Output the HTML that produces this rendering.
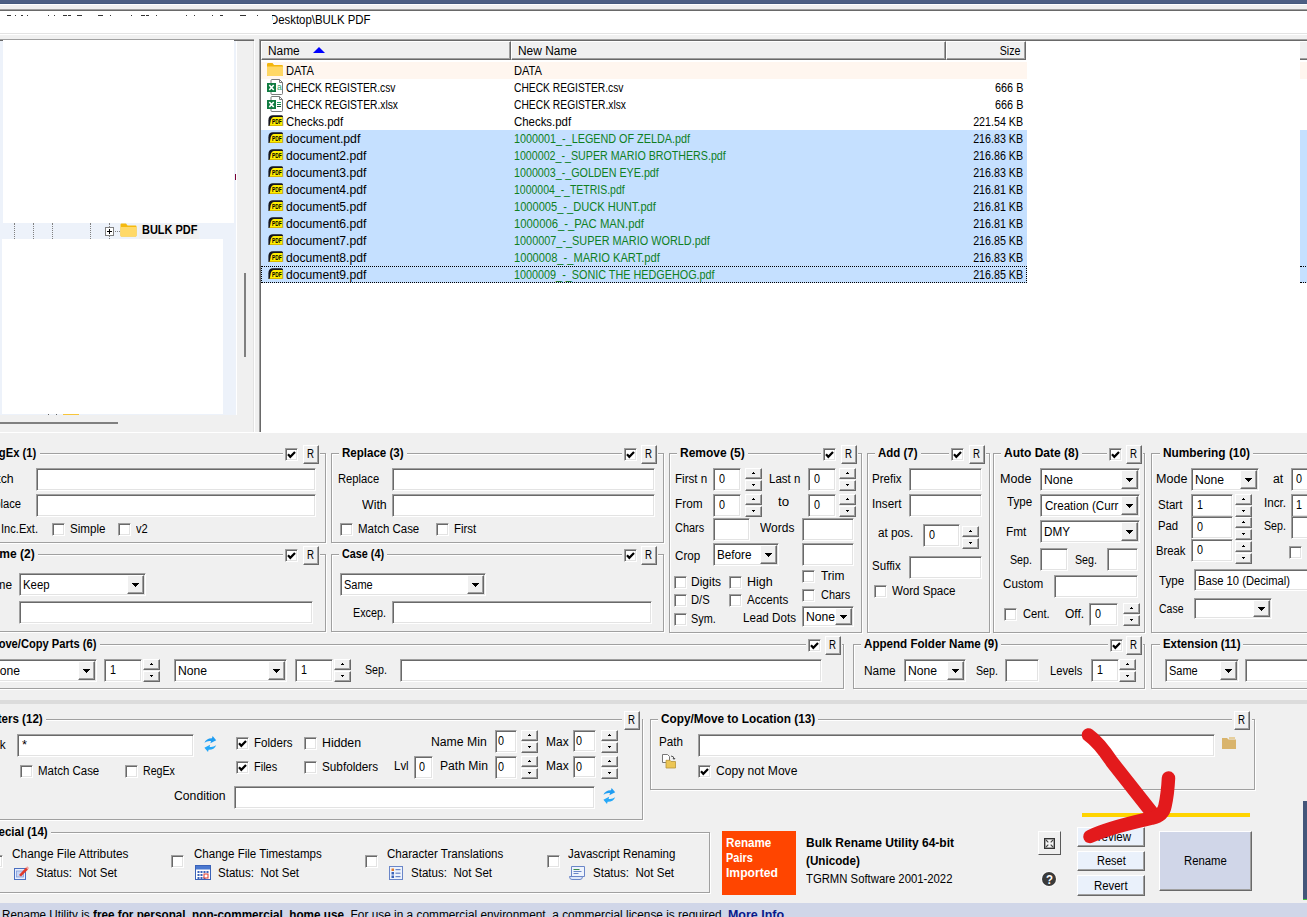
<!DOCTYPE html>
<html><head><meta charset="utf-8"><title>Bulk Rename Utility</title>
<style>
html,body{margin:0;padding:0}
body{width:1307px;height:917px;overflow:hidden;background:#f0f0f0;font:12px/14px "Liberation Sans",sans-serif;color:#000}
#root{position:relative;width:1307px;height:917px;overflow:hidden;background:#f0f0f0}
.a{position:absolute}
.t{position:absolute;white-space:pre;transform-origin:0 0;line-height:14px}
.sk{position:absolute;box-sizing:border-box;border:1px solid;border-color:#a0a0a0 #fff #fff #a0a0a0;box-shadow:inset 1px 1px 0 #696969,inset -1px -1px 0 #e3e3e3}
.rb{position:absolute;box-sizing:border-box;border:1px solid;border-color:#fff #696969 #696969 #fff;box-shadow:inset -1px -1px 0 #a0a0a0}
.cb{position:absolute;box-sizing:border-box;width:13px;height:13px;background:#fff;border:1px solid;border-color:#a0a0a0 #fff #fff #a0a0a0;box-shadow:inset 1px 1px 0 #696969,inset -1px -1px 0 #e3e3e3}
.gb{position:absolute;border:1px solid #a0a0a0;box-shadow:1px 1px 0 #fff,inset 1px 1px 0 #fff}

</style></head>
<body>
<div id="root">
<div class="a" style="left:0px;top:0px;width:1307px;height:4px;background:#4d5f84;"></div>
<div class="a" style="left:0px;top:3px;width:1307px;height:1px;background:#465a7e;"></div>
<div class="a" style="left:0px;top:4px;width:1307px;height:1px;background:#fff;"></div>
<div class="sk" style="left:-5px;top:9px;width:1320px;height:26px;background:#fff"></div>
<div class="a" style="left:7px;top:15px;width:4px;height:1px;background:#333;"></div>
<div class="a" style="left:15px;top:15px;width:1px;height:1px;background:#333;"></div>
<div class="a" style="left:21px;top:15px;width:2px;height:1px;background:#333;"></div>
<div class="a" style="left:27px;top:15px;width:1px;height:1px;background:#333;"></div>
<div class="a" style="left:48px;top:15px;width:1px;height:1px;background:#333;"></div>
<div class="a" style="left:54px;top:15px;width:1px;height:1px;background:#333;"></div>
<div class="a" style="left:63px;top:15px;width:4px;height:1px;background:#333;"></div>
<div class="a" style="left:68px;top:15px;width:3px;height:1px;background:#333;"></div>
<div class="a" style="left:77px;top:15px;width:5px;height:1px;background:#333;"></div>
<div class="a" style="left:98px;top:15px;width:5px;height:1px;background:#333;"></div>
<div class="a" style="left:110px;top:15px;width:1px;height:1px;background:#333;"></div>
<div class="a" style="left:131px;top:15px;width:1px;height:1px;background:#333;"></div>
<div class="a" style="left:141px;top:15px;width:4px;height:1px;background:#333;"></div>
<div class="a" style="left:146px;top:15px;width:3px;height:1px;background:#333;"></div>
<div class="a" style="left:156px;top:15px;width:1px;height:1px;background:#333;"></div>
<div class="a" style="left:186px;top:15px;width:1px;height:1px;background:#333;"></div>
<div class="a" style="left:194px;top:15px;width:1px;height:1px;background:#333;"></div>
<div class="a" style="left:212px;top:15px;width:1px;height:1px;background:#333;"></div>
<div class="a" style="left:220px;top:15px;width:3px;height:1px;background:#333;"></div>
<div class="a" style="left:240px;top:15px;width:6px;height:1px;background:#333;"></div>
<div class="a" style="left:257px;top:15px;width:1px;height:1px;background:#333;"></div>
<div class="a" style="left:266px;top:15px;width:1px;height:1px;background:#333;"></div>
<span class="t" style="top:13px;left:270px;transform:scaleX(0.9478);">Desktop\BULK PDF</span>
<div class="a" style="left:262px;top:11px;width:10px;height:12px;background:#fff;"></div>
<div class="a" style="left:270px;top:20px;width:3px;height:4px;background:#fff;"></div>
<div class="a" style="left:0px;top:39px;width:254px;height:1px;background:#a0a0a0;"></div>
<div class="a" style="left:0px;top:40px;width:254px;height:1px;background:#696969;"></div>
<div class="a" style="left:0px;top:41px;width:236px;height:374px;background:#edf2fa;"></div>
<div class="a" style="left:3px;top:40px;width:231px;height:183px;background:#fff;"></div>
<div class="a" style="left:2px;top:239px;width:221px;height:175px;background:#fff;"></div>
<div class="a" style="left:235px;top:174px;width:1px;height:6px;background:#7a0033;"></div>
<div class="a" style="left:14px;top:223px;width:0;height:16px;border-left:1px dotted #808080"></div>
<div class="a" style="left:33px;top:223px;width:0;height:16px;border-left:1px dotted #808080"></div>
<div class="a" style="left:52px;top:223px;width:0;height:16px;border-left:1px dotted #808080"></div>
<div class="a" style="left:90px;top:223px;width:0;height:16px;border-left:1px dotted #808080"></div>
<div class="a" style="left:109px;top:223px;width:0;height:16px;border-left:1px dotted #808080"></div>
<div class="a" style="left:113px;top:231px;width:7px;height:0;border-top:1px dotted #808080"></div>
<div class="a" style="left:105px;top:227px;width:9px;height:9px;box-sizing:border-box;border:1px solid #808080;background:#fff"></div>
<div class="a" style="left:107px;top:231px;width:5px;height:1px;background:#000;"></div>
<div class="a" style="left:109px;top:229px;width:1px;height:5px;background:#000;"></div>
<svg class="a" style="left:120px;top:223px" width="17" height="14" viewBox="0 0 17 14"><path d="M0.5 1.5 Q0.5 0.5 1.5 0.5 H6 L7.5 2.5 H15.5 Q16.5 2.5 16.5 3.5 V12.5 Q16.5 13.5 15.5 13.5 H1.5 Q0.5 13.5 0.5 12.5 Z" fill="#f5b90f"/><path d="M0.5 4 H16.5 V12.5 Q16.5 13.5 15.5 13.5 H1.5 Q0.5 13.5 0.5 12.5 Z" fill="#ffd968"/></svg>
<div class="a" style="left:139px;top:224px;width:60px;height:15px;background:#f0f0f0;"></div>
<span class="t" style="top:223px;left:141.5px;transform:scaleX(0.9149);font-weight:700;">BULK PDF</span>
<div class="a" style="left:63px;top:414px;width:16px;height:1px;background:#f7c53a;"></div>
<div class="a" style="left:48px;top:414px;width:1px;height:1px;background:#666;"></div>
<div class="a" style="left:56px;top:414px;width:1px;height:1px;background:#666;"></div>
<div class="a" style="left:244px;top:273px;width:2px;height:84px;background:#808080;"></div>
<div class="a" style="left:0px;top:422px;width:118px;height:2px;background:#808080;"></div>
<div class="a" style="left:236px;top:41px;width:1px;height:374px;background:#fff;"></div>
<div class="a" style="left:253px;top:41px;width:1px;height:391px;background:#e3e3e3;"></div>
<div class="a" style="left:254px;top:41px;width:1px;height:391px;background:#fff;"></div>
<div class="a" style="left:0px;top:432px;width:1307px;height:1px;background:#fff;"></div>
<div class="a" style="left:259px;top:39px;width:1060px;height:1px;background:#a0a0a0;"></div>
<div class="a" style="left:259px;top:40px;width:1060px;height:1px;background:#696969;"></div>
<div class="a" style="left:259px;top:39px;width:1px;height:393px;background:#a0a0a0;"></div>
<div class="a" style="left:260px;top:40px;width:1px;height:392px;background:#696969;"></div>
<div class="a" style="left:261px;top:41px;width:1046px;height:391px;background:#fff;"></div>
<div class="a" style="left:261px;top:41px;width:250px;height:19px;box-sizing:border-box;background:#f0f0f0;border:1px solid;border-color:#fff #696969 #696969 #fff;box-shadow:inset -1px -1px 0 #a0a0a0"></div>
<span class="t" style="top:44px;left:268px;transform:scaleX(0.9907);">Name</span>
<div class="a" style="left:511px;top:41px;width:435px;height:19px;box-sizing:border-box;background:#f0f0f0;border:1px solid;border-color:#fff #696969 #696969 #fff;box-shadow:inset -1px -1px 0 #a0a0a0"></div>
<span class="t" style="top:44px;left:518px;transform:scaleX(0.9932);">New Name</span>
<div class="a" style="left:946px;top:41px;width:80px;height:19px;box-sizing:border-box;background:#f0f0f0;border:1px solid;border-color:#fff #696969 #696969 #fff;box-shadow:inset -1px -1px 0 #a0a0a0"></div>
<span class="t" style="top:44px;right:calc(100% - 1020px);transform-origin:100% 0;transform:scaleX(0.8833);">Size</span>
<div class="a" style="left:1300px;top:42px;width:7px;height:16px;background:#f0f0f0;"></div>
<div class="a" style="left:1300px;top:58px;width:7px;height:1px;background:#a0a0a0;"></div>
<div class="a" style="left:1300px;top:59px;width:7px;height:1px;background:#696969;"></div>
<div class="a" style="left:312.5px;top:47px;width:0;height:0;border-left:6px solid transparent;border-right:6px solid transparent;border-bottom:6px solid #0000ff"></div>
<div class="a" style="left:261px;top:62px;width:766px;height:17px;background:#fff6ef;"></div>
<div class="a" style="left:1300px;top:62px;width:7px;height:17px;background:#fff6ef;"></div>
<svg class="a" style="left:267px;top:63px" width="16" height="13" viewBox="0 0 16 13"><path d="M0 1.2 Q0 0 1.2 0 H5.5 L7 2 H14.8 Q16 2 16 3.2 V11.8 Q16 13 14.8 13 H1.2 Q0 13 0 11.8 Z" fill="#f3b50c"/><path d="M0 3.5 H16 V11.8 Q16 13 14.8 13 H1.2 Q0 13 0 11.8 Z" fill="#ffd764"/></svg>
<span class="t" style="top:64px;left:286px;transform:scaleX(0.9265);">DATA</span>
<span class="t" style="top:64px;left:513.8px;transform:scaleX(0.9265);">DATA</span>
<svg class="a" style="left:267px;top:79px" width="16" height="16" viewBox="0 0 16 16"><path d="M5 0.5 H12.5 L15.5 3.5 V14.5 Q15.5 15.5 14.5 15.5 H5 Q4 15.5 4 14.5 V1.5 Q4 0.5 5 0.5 Z" fill="#fff" stroke="#7a7a7a" stroke-width="1"/><path d="M12.5 0.5 V3.5 H15.5" fill="none" stroke="#7a7a7a" stroke-width="1"/><rect x="0" y="4" width="9" height="9" fill="#107c41"/><path d="M2.3 6 L6.7 11 M6.7 6 L2.3 11" stroke="#fff" stroke-width="1.6"/><text x="10" y="11.4" font-family="Liberation Sans, sans-serif" font-size="8.5" fill="#21a366">a</text></svg>
<span class="t" style="top:81px;left:286px;transform:scaleX(0.8554);">CHECK REGISTER.csv</span>
<span class="t" style="top:81px;left:513.8px;transform:scaleX(0.8554);">CHECK REGISTER.csv</span>
<span class="t" style="top:81px;right:calc(100% - 1023.3px);transform-origin:100% 0;transform:scaleX(0.9020);">666 B</span>
<svg class="a" style="left:267px;top:96px" width="16" height="16" viewBox="0 0 16 16"><path d="M5 0.5 H12.5 L15.5 3.5 V14.5 Q15.5 15.5 14.5 15.5 H5 Q4 15.5 4 14.5 V1.5 Q4 0.5 5 0.5 Z" fill="#fff" stroke="#7a7a7a" stroke-width="1"/><path d="M12.5 0.5 V3.5 H15.5" fill="none" stroke="#7a7a7a" stroke-width="1"/><rect x="0" y="4" width="9" height="9" fill="#107c41"/><path d="M2.3 6 L6.7 11 M6.7 6 L2.3 11" stroke="#fff" stroke-width="1.6"/><rect x="10" y="6" width="4" height="1" fill="#21a366"/><rect x="10" y="8" width="4" height="1" fill="#107c41"/><rect x="10" y="10" width="4" height="1" fill="#185c37"/></svg>
<span class="t" style="top:98px;left:286px;transform:scaleX(0.8570);">CHECK REGISTER.xlsx</span>
<span class="t" style="top:98px;left:513.8px;transform:scaleX(0.8570);">CHECK REGISTER.xlsx</span>
<span class="t" style="top:98px;right:calc(100% - 1023.3px);transform-origin:100% 0;transform:scaleX(0.9020);">666 B</span>
<svg class="a" style="left:267.5px;top:115.3px" width="16" height="12" viewBox="0 0 16 12"><path d="M0.4 11 V5.2 Q0.4 0.2 5 0.2 H13.6 Q15 0.2 15 1.8 V11 Z" fill="#15151f"/><path d="M1.7 11 L2.7 5.6 Q3.5 1.9 6 1.9 H14.7 V11 Z" fill="#ffee00"/><path d="M1.7 11 L1.9 10 H14.7 V11 Z" fill="#d8b800"/><path d="M14.7 1.9 V11 H15.4 V2.5 Z" fill="#b9b9c4"/><text x="4" y="8.8" font-family="Liberation Sans, sans-serif" font-size="7" font-weight="700" fill="#000" textLength="9.6" lengthAdjust="spacingAndGlyphs">PDF</text></svg>
<span class="t" style="top:115px;left:286px;transform:scaleX(0.9517);">Checks.pdf</span>
<span class="t" style="top:115px;left:513.8px;transform:scaleX(0.9517);">Checks.pdf</span>
<span class="t" style="top:115px;right:calc(100% - 1023.3px);transform-origin:100% 0;transform:scaleX(0.8902);">221.54 KB</span>
<div class="a" style="left:261px;top:130px;width:766px;height:17px;background:#c5e0ff;"></div>
<div class="a" style="left:1300px;top:130px;width:7px;height:17px;background:#c5e0ff;"></div>
<svg class="a" style="left:267.5px;top:132.3px" width="16" height="12" viewBox="0 0 16 12"><path d="M0.4 11 V5.2 Q0.4 0.2 5 0.2 H13.6 Q15 0.2 15 1.8 V11 Z" fill="#15151f"/><path d="M1.7 11 L2.7 5.6 Q3.5 1.9 6 1.9 H14.7 V11 Z" fill="#ffee00"/><path d="M1.7 11 L1.9 10 H14.7 V11 Z" fill="#d8b800"/><path d="M14.7 1.9 V11 H15.4 V2.5 Z" fill="#b9b9c4"/><text x="4" y="8.8" font-family="Liberation Sans, sans-serif" font-size="7" font-weight="700" fill="#000" textLength="9.6" lengthAdjust="spacingAndGlyphs">PDF</text></svg>
<span class="t" style="top:132px;left:286px;transform:scaleX(1.0224);">document.pdf</span>
<span class="t" style="top:132px;left:513.8px;transform:scaleX(0.9002);color:#0f7f1f;">1000001_-_LEGEND OF ZELDA.pdf</span>
<span class="t" style="top:132px;right:calc(100% - 1023.3px);transform-origin:100% 0;transform:scaleX(0.8902);">216.83 KB</span>
<div class="a" style="left:261px;top:147px;width:766px;height:17px;background:#c5e0ff;"></div>
<div class="a" style="left:1300px;top:147px;width:7px;height:17px;background:#c5e0ff;"></div>
<svg class="a" style="left:267.5px;top:149.3px" width="16" height="12" viewBox="0 0 16 12"><path d="M0.4 11 V5.2 Q0.4 0.2 5 0.2 H13.6 Q15 0.2 15 1.8 V11 Z" fill="#15151f"/><path d="M1.7 11 L2.7 5.6 Q3.5 1.9 6 1.9 H14.7 V11 Z" fill="#ffee00"/><path d="M1.7 11 L1.9 10 H14.7 V11 Z" fill="#d8b800"/><path d="M14.7 1.9 V11 H15.4 V2.5 Z" fill="#b9b9c4"/><text x="4" y="8.8" font-family="Liberation Sans, sans-serif" font-size="7" font-weight="700" fill="#000" textLength="9.6" lengthAdjust="spacingAndGlyphs">PDF</text></svg>
<span class="t" style="top:149px;left:286px;transform:scaleX(1.0120);">document2.pdf</span>
<span class="t" style="top:149px;left:513.8px;transform:scaleX(0.8893);color:#0f7f1f;">1000002_-_SUPER MARIO BROTHERS.pdf</span>
<span class="t" style="top:149px;right:calc(100% - 1023.3px);transform-origin:100% 0;transform:scaleX(0.8902);">216.86 KB</span>
<div class="a" style="left:261px;top:164px;width:766px;height:17px;background:#c5e0ff;"></div>
<div class="a" style="left:1300px;top:164px;width:7px;height:17px;background:#c5e0ff;"></div>
<svg class="a" style="left:267.5px;top:166.3px" width="16" height="12" viewBox="0 0 16 12"><path d="M0.4 11 V5.2 Q0.4 0.2 5 0.2 H13.6 Q15 0.2 15 1.8 V11 Z" fill="#15151f"/><path d="M1.7 11 L2.7 5.6 Q3.5 1.9 6 1.9 H14.7 V11 Z" fill="#ffee00"/><path d="M1.7 11 L1.9 10 H14.7 V11 Z" fill="#d8b800"/><path d="M14.7 1.9 V11 H15.4 V2.5 Z" fill="#b9b9c4"/><text x="4" y="8.8" font-family="Liberation Sans, sans-serif" font-size="7" font-weight="700" fill="#000" textLength="9.6" lengthAdjust="spacingAndGlyphs">PDF</text></svg>
<span class="t" style="top:166px;left:286px;transform:scaleX(1.0120);">document3.pdf</span>
<span class="t" style="top:166px;left:513.8px;transform:scaleX(0.8933);color:#0f7f1f;">1000003_-_GOLDEN EYE.pdf</span>
<span class="t" style="top:166px;right:calc(100% - 1023.3px);transform-origin:100% 0;transform:scaleX(0.8902);">216.83 KB</span>
<div class="a" style="left:261px;top:181px;width:766px;height:17px;background:#c5e0ff;"></div>
<div class="a" style="left:1300px;top:181px;width:7px;height:17px;background:#c5e0ff;"></div>
<svg class="a" style="left:267.5px;top:183.3px" width="16" height="12" viewBox="0 0 16 12"><path d="M0.4 11 V5.2 Q0.4 0.2 5 0.2 H13.6 Q15 0.2 15 1.8 V11 Z" fill="#15151f"/><path d="M1.7 11 L2.7 5.6 Q3.5 1.9 6 1.9 H14.7 V11 Z" fill="#ffee00"/><path d="M1.7 11 L1.9 10 H14.7 V11 Z" fill="#d8b800"/><path d="M14.7 1.9 V11 H15.4 V2.5 Z" fill="#b9b9c4"/><text x="4" y="8.8" font-family="Liberation Sans, sans-serif" font-size="7" font-weight="700" fill="#000" textLength="9.6" lengthAdjust="spacingAndGlyphs">PDF</text></svg>
<span class="t" style="top:183px;left:286px;transform:scaleX(1.0120);">document4.pdf</span>
<span class="t" style="top:183px;left:513.8px;transform:scaleX(0.8733);color:#0f7f1f;">1000004_-_TETRIS.pdf</span>
<span class="t" style="top:183px;right:calc(100% - 1023.3px);transform-origin:100% 0;transform:scaleX(0.8902);">216.81 KB</span>
<div class="a" style="left:261px;top:198px;width:766px;height:17px;background:#c5e0ff;"></div>
<div class="a" style="left:1300px;top:198px;width:7px;height:17px;background:#c5e0ff;"></div>
<svg class="a" style="left:267.5px;top:200.3px" width="16" height="12" viewBox="0 0 16 12"><path d="M0.4 11 V5.2 Q0.4 0.2 5 0.2 H13.6 Q15 0.2 15 1.8 V11 Z" fill="#15151f"/><path d="M1.7 11 L2.7 5.6 Q3.5 1.9 6 1.9 H14.7 V11 Z" fill="#ffee00"/><path d="M1.7 11 L1.9 10 H14.7 V11 Z" fill="#d8b800"/><path d="M14.7 1.9 V11 H15.4 V2.5 Z" fill="#b9b9c4"/><text x="4" y="8.8" font-family="Liberation Sans, sans-serif" font-size="7" font-weight="700" fill="#000" textLength="9.6" lengthAdjust="spacingAndGlyphs">PDF</text></svg>
<span class="t" style="top:200px;left:286px;transform:scaleX(1.0120);">document5.pdf</span>
<span class="t" style="top:200px;left:513.8px;transform:scaleX(0.9244);color:#0f7f1f;">1000005_-_DUCK HUNT.pdf</span>
<span class="t" style="top:200px;right:calc(100% - 1023.3px);transform-origin:100% 0;transform:scaleX(0.8902);">216.81 KB</span>
<div class="a" style="left:261px;top:215px;width:766px;height:17px;background:#c5e0ff;"></div>
<div class="a" style="left:1300px;top:215px;width:7px;height:17px;background:#c5e0ff;"></div>
<svg class="a" style="left:267.5px;top:217.3px" width="16" height="12" viewBox="0 0 16 12"><path d="M0.4 11 V5.2 Q0.4 0.2 5 0.2 H13.6 Q15 0.2 15 1.8 V11 Z" fill="#15151f"/><path d="M1.7 11 L2.7 5.6 Q3.5 1.9 6 1.9 H14.7 V11 Z" fill="#ffee00"/><path d="M1.7 11 L1.9 10 H14.7 V11 Z" fill="#d8b800"/><path d="M14.7 1.9 V11 H15.4 V2.5 Z" fill="#b9b9c4"/><text x="4" y="8.8" font-family="Liberation Sans, sans-serif" font-size="7" font-weight="700" fill="#000" textLength="9.6" lengthAdjust="spacingAndGlyphs">PDF</text></svg>
<span class="t" style="top:217px;left:286px;transform:scaleX(1.0120);">document6.pdf</span>
<span class="t" style="top:217px;left:513.8px;transform:scaleX(0.9421);color:#0f7f1f;">1000006_-_PAC MAN.pdf</span>
<span class="t" style="top:217px;right:calc(100% - 1023.3px);transform-origin:100% 0;transform:scaleX(0.8902);">216.81 KB</span>
<div class="a" style="left:261px;top:232px;width:766px;height:17px;background:#c5e0ff;"></div>
<div class="a" style="left:1300px;top:232px;width:7px;height:17px;background:#c5e0ff;"></div>
<svg class="a" style="left:267.5px;top:234.3px" width="16" height="12" viewBox="0 0 16 12"><path d="M0.4 11 V5.2 Q0.4 0.2 5 0.2 H13.6 Q15 0.2 15 1.8 V11 Z" fill="#15151f"/><path d="M1.7 11 L2.7 5.6 Q3.5 1.9 6 1.9 H14.7 V11 Z" fill="#ffee00"/><path d="M1.7 11 L1.9 10 H14.7 V11 Z" fill="#d8b800"/><path d="M14.7 1.9 V11 H15.4 V2.5 Z" fill="#b9b9c4"/><text x="4" y="8.8" font-family="Liberation Sans, sans-serif" font-size="7" font-weight="700" fill="#000" textLength="9.6" lengthAdjust="spacingAndGlyphs">PDF</text></svg>
<span class="t" style="top:234px;left:286px;transform:scaleX(1.0120);">document7.pdf</span>
<span class="t" style="top:234px;left:513.8px;transform:scaleX(0.9062);color:#0f7f1f;">1000007_-_SUPER MARIO WORLD.pdf</span>
<span class="t" style="top:234px;right:calc(100% - 1023.3px);transform-origin:100% 0;transform:scaleX(0.8902);">216.85 KB</span>
<div class="a" style="left:261px;top:249px;width:766px;height:17px;background:#c5e0ff;"></div>
<div class="a" style="left:1300px;top:249px;width:7px;height:17px;background:#c5e0ff;"></div>
<svg class="a" style="left:267.5px;top:251.3px" width="16" height="12" viewBox="0 0 16 12"><path d="M0.4 11 V5.2 Q0.4 0.2 5 0.2 H13.6 Q15 0.2 15 1.8 V11 Z" fill="#15151f"/><path d="M1.7 11 L2.7 5.6 Q3.5 1.9 6 1.9 H14.7 V11 Z" fill="#ffee00"/><path d="M1.7 11 L1.9 10 H14.7 V11 Z" fill="#d8b800"/><path d="M14.7 1.9 V11 H15.4 V2.5 Z" fill="#b9b9c4"/><text x="4" y="8.8" font-family="Liberation Sans, sans-serif" font-size="7" font-weight="700" fill="#000" textLength="9.6" lengthAdjust="spacingAndGlyphs">PDF</text></svg>
<span class="t" style="top:251px;left:286px;transform:scaleX(1.0120);">document8.pdf</span>
<span class="t" style="top:251px;left:513.8px;transform:scaleX(0.9274);color:#0f7f1f;">1000008_-_MARIO KART.pdf</span>
<span class="t" style="top:251px;right:calc(100% - 1023.3px);transform-origin:100% 0;transform:scaleX(0.8902);">216.83 KB</span>
<div class="a" style="left:261px;top:266px;width:766px;height:17px;background:#c5e0ff;"></div>
<div class="a" style="left:1300px;top:266px;width:7px;height:17px;background:#c5e0ff;"></div>
<svg class="a" style="left:267.5px;top:268.3px" width="16" height="12" viewBox="0 0 16 12"><path d="M0.4 11 V5.2 Q0.4 0.2 5 0.2 H13.6 Q15 0.2 15 1.8 V11 Z" fill="#15151f"/><path d="M1.7 11 L2.7 5.6 Q3.5 1.9 6 1.9 H14.7 V11 Z" fill="#ffee00"/><path d="M1.7 11 L1.9 10 H14.7 V11 Z" fill="#d8b800"/><path d="M14.7 1.9 V11 H15.4 V2.5 Z" fill="#b9b9c4"/><text x="4" y="8.8" font-family="Liberation Sans, sans-serif" font-size="7" font-weight="700" fill="#000" textLength="9.6" lengthAdjust="spacingAndGlyphs">PDF</text></svg>
<span class="t" style="top:268px;left:286px;transform:scaleX(1.0120);">document9.pdf</span>
<span class="t" style="top:268px;left:513.8px;transform:scaleX(0.9015);color:#0f7f1f;">1000009_-_SONIC THE HEDGEHOG.pdf</span>
<span class="t" style="top:268px;right:calc(100% - 1023.3px);transform-origin:100% 0;transform:scaleX(0.8902);">216.85 KB</span>
<div class="a" style="left:261px;top:266px;width:766px;height:17px;box-sizing:border-box;border:1px dotted #000"></div>
<div class="a" style="left:1300px;top:266px;width:20px;height:17px;box-sizing:border-box;border:1px dotted #000;border-left:none"></div>
<div class="gb" style="left:-27px;top:453px;width:351px;height:88px"></div>
<div class="a" style="left:-18.255908203124996px;top:451px;width:57.855908203125px;height:5px;background:#f0f0f0;"></div>
<span class="t" style="top:446px;right:calc(100% - 36.6px);transform-origin:100% 0;transform:scaleX(0.9369);font-weight:700;">RegEx (1)</span>
<div class="a" style="left:283px;top:451px;width:37px;height:5px;background:#f0f0f0;"></div>
<div class="cb" style="left:285px;top:448px"><svg width="13" height="13" viewBox="0 0 13 13" style="position:absolute;left:-1px;top:-1px"><path d="M3 6.3 L5.3 8.8 L10 4" fill="none" stroke="#000" stroke-width="2.2"/></svg></div>
<div class="rb" style="left:303px;top:445px;width:16px;height:19px;background:#f0f0f0"></div>
<span class="t" style="top:447px;left:307px;transform:scaleX(0.8078);">R</span>
<span class="t" style="top:472px;right:calc(100% - 13.6px);transform-origin:100% 0;transform:scaleX(1.0250);">Match</span>
<div class="sk" style="left:36px;top:468px;width:280px;height:23px;background:#fff"></div>
<span class="t" style="top:497px;right:calc(100% - 21px);transform-origin:100% 0;transform:scaleX(0.9351);">Replace</span>
<div class="sk" style="left:36px;top:494px;width:280px;height:23px;background:#fff"></div>
<span class="t" style="top:522px;right:calc(100% - 37.7px);transform-origin:100% 0;transform:scaleX(0.9247);">Inc.Ext.</span>
<div class="cb" style="left:52px;top:523px"></div>
<span class="t" style="top:522px;left:70px;transform:scaleX(0.9671);">Simple</span>
<div class="cb" style="left:118px;top:523px"></div>
<span class="t" style="top:522px;left:135.6px;transform:scaleX(0.9270);">v2</span>
<div class="gb" style="left:-27px;top:554px;width:351px;height:76px"></div>
<div class="a" style="left:-18.930468750000003px;top:552px;width:56.73046875px;height:5px;background:#f0f0f0;"></div>
<span class="t" style="top:547px;right:calc(100% - 34.8px);transform-origin:100% 0;transform:scaleX(1.0009);font-weight:700;">Name (2)</span>
<div class="a" style="left:283px;top:552px;width:37px;height:5px;background:#f0f0f0;"></div>
<div class="cb" style="left:285px;top:549px"><svg width="13" height="13" viewBox="0 0 13 13" style="position:absolute;left:-1px;top:-1px"><path d="M3 6.3 L5.3 8.8 L10 4" fill="none" stroke="#000" stroke-width="2.2"/></svg></div>
<div class="rb" style="left:303px;top:546px;width:16px;height:19px;background:#f0f0f0"></div>
<span class="t" style="top:548px;left:307px;transform:scaleX(0.8078);">R</span>
<span class="t" style="top:578px;right:calc(100% - 11.8px);transform-origin:100% 0;transform:scaleX(0.9907);">Name</span>
<div class="sk" style="left:19px;top:573px;width:127px;height:23px;background:#fff"></div>
<div class="rb" style="left:127px;top:575px;width:17px;height:19px;background:#f0f0f0"></div>
<div class="a" style="left:132px;top:583px;width:7px;height:1px;background:#000"></div>
<div class="a" style="left:133px;top:584px;width:5px;height:1px;background:#000"></div>
<div class="a" style="left:134px;top:585px;width:3px;height:1px;background:#000"></div>
<div class="a" style="left:135px;top:586px;width:1px;height:1px;background:#000"></div>
<span class="t" style="top:578px;left:23.3px;transform:scaleX(0.9498);">Keep</span>
<div class="sk" style="left:19px;top:601px;width:294px;height:23px;background:#fff"></div>
<div class="gb" style="left:331px;top:453px;width:331px;height:88px"></div>
<div class="a" style="left:339px;top:451px;width:67.6px;height:5px;background:#f0f0f0;"></div>
<span class="t" style="top:446px;left:342px;transform:scaleX(0.9621);font-weight:700;">Replace (3)</span>
<div class="a" style="left:622px;top:451px;width:36px;height:5px;background:#f0f0f0;"></div>
<div class="cb" style="left:624px;top:448px"><svg width="13" height="13" viewBox="0 0 13 13" style="position:absolute;left:-1px;top:-1px"><path d="M3 6.3 L5.3 8.8 L10 4" fill="none" stroke="#000" stroke-width="2.2"/></svg></div>
<div class="rb" style="left:641px;top:445px;width:16px;height:19px;background:#f0f0f0"></div>
<span class="t" style="top:447px;left:645px;transform:scaleX(0.8078);">R</span>
<span class="t" style="top:472px;left:338px;transform:scaleX(0.9351);">Replace</span>
<div class="sk" style="left:392px;top:468px;width:263px;height:23px;background:#fff"></div>
<span class="t" style="top:498px;left:362px;transform:scaleX(1.0313);">With</span>
<div class="sk" style="left:392px;top:494px;width:263px;height:23px;background:#fff"></div>
<div class="cb" style="left:340px;top:523px"></div>
<span class="t" style="top:522px;left:358.3px;transform:scaleX(0.9568);">Match Case</span>
<div class="cb" style="left:436px;top:523px"></div>
<span class="t" style="top:522px;left:454.4px;transform:scaleX(0.9535);">First</span>
<div class="gb" style="left:331px;top:554px;width:331px;height:76px"></div>
<div class="a" style="left:339px;top:552px;width:48px;height:5px;background:#f0f0f0;"></div>
<span class="t" style="top:547px;left:342px;transform:scaleX(0.8996);font-weight:700;">Case (4)</span>
<div class="a" style="left:622px;top:552px;width:36px;height:5px;background:#f0f0f0;"></div>
<div class="cb" style="left:624px;top:549px"><svg width="13" height="13" viewBox="0 0 13 13" style="position:absolute;left:-1px;top:-1px"><path d="M3 6.3 L5.3 8.8 L10 4" fill="none" stroke="#000" stroke-width="2.2"/></svg></div>
<div class="rb" style="left:641px;top:546px;width:16px;height:19px;background:#f0f0f0"></div>
<span class="t" style="top:548px;left:645px;transform:scaleX(0.8078);">R</span>
<div class="sk" style="left:340px;top:573px;width:146px;height:23px;background:#fff"></div>
<div class="rb" style="left:467px;top:575px;width:17px;height:19px;background:#f0f0f0"></div>
<div class="a" style="left:472px;top:583px;width:7px;height:1px;background:#000"></div>
<div class="a" style="left:473px;top:584px;width:5px;height:1px;background:#000"></div>
<div class="a" style="left:474px;top:585px;width:3px;height:1px;background:#000"></div>
<div class="a" style="left:475px;top:586px;width:1px;height:1px;background:#000"></div>
<span class="t" style="top:578px;left:344.3px;transform:scaleX(0.9159);">Same</span>
<span class="t" style="top:606px;left:353px;transform:scaleX(0.8992);">Excep.</span>
<div class="sk" style="left:392px;top:601px;width:260px;height:23px;background:#fff"></div>
<div class="gb" style="left:669px;top:453px;width:191px;height:178px"></div>
<div class="a" style="left:677px;top:451px;width:70.7px;height:5px;background:#f0f0f0;"></div>
<span class="t" style="top:446px;left:680px;transform:scaleX(1.0002);font-weight:700;">Remove (5)</span>
<div class="a" style="left:821px;top:451px;width:37px;height:5px;background:#f0f0f0;"></div>
<div class="cb" style="left:823px;top:448px"><svg width="13" height="13" viewBox="0 0 13 13" style="position:absolute;left:-1px;top:-1px"><path d="M3 6.3 L5.3 8.8 L10 4" fill="none" stroke="#000" stroke-width="2.2"/></svg></div>
<div class="rb" style="left:841px;top:445px;width:16px;height:19px;background:#f0f0f0"></div>
<span class="t" style="top:447px;left:845px;transform:scaleX(0.8078);">R</span>
<span class="t" style="top:472px;left:674.7px;transform:scaleX(0.9691);">First n</span>
<div class="sk" style="left:713px;top:468px;width:28px;height:23px;background:#fff"></div>
<span class="t" style="top:472px;left:719px;transform:scaleX(0.8990);">0</span>
<div class="rb" style="left:745px;top:468px;width:17px;height:11px;background:#f0f0f0"></div>
<div class="rb" style="left:745px;top:480px;width:17px;height:11px;background:#f0f0f0"></div>
<div class="a" style="left:753px;top:472px;width:1px;height:1px;background:#000"></div>
<div class="a" style="left:752px;top:473px;width:3px;height:1px;background:#000"></div>
<div class="a" style="left:752px;top:484px;width:3px;height:1px;background:#000"></div>
<div class="a" style="left:753px;top:485px;width:1px;height:1px;background:#000"></div>
<span class="t" style="top:472px;left:769.3px;transform:scaleX(0.9584);">Last n</span>
<div class="sk" style="left:808px;top:468px;width:28px;height:23px;background:#fff"></div>
<span class="t" style="top:472px;left:814px;transform:scaleX(0.8990);">0</span>
<div class="rb" style="left:839px;top:468px;width:17px;height:11px;background:#f0f0f0"></div>
<div class="rb" style="left:839px;top:480px;width:17px;height:11px;background:#f0f0f0"></div>
<div class="a" style="left:847px;top:472px;width:1px;height:1px;background:#000"></div>
<div class="a" style="left:846px;top:473px;width:3px;height:1px;background:#000"></div>
<div class="a" style="left:846px;top:484px;width:3px;height:1px;background:#000"></div>
<div class="a" style="left:847px;top:485px;width:1px;height:1px;background:#000"></div>
<span class="t" style="top:497px;left:674.7px;transform:scaleX(0.9833);">From</span>
<div class="sk" style="left:713px;top:494px;width:28px;height:23px;background:#fff"></div>
<span class="t" style="top:498px;left:719px;transform:scaleX(0.8990);">0</span>
<div class="rb" style="left:745px;top:494px;width:17px;height:11px;background:#f0f0f0"></div>
<div class="rb" style="left:745px;top:506px;width:17px;height:11px;background:#f0f0f0"></div>
<div class="a" style="left:753px;top:498px;width:1px;height:1px;background:#000"></div>
<div class="a" style="left:752px;top:499px;width:3px;height:1px;background:#000"></div>
<div class="a" style="left:752px;top:510px;width:3px;height:1px;background:#000"></div>
<div class="a" style="left:753px;top:511px;width:1px;height:1px;background:#000"></div>
<span class="t" style="top:495px;left:778.3px;transform:scaleX(1.1095);">to</span>
<div class="sk" style="left:808px;top:494px;width:28px;height:23px;background:#fff"></div>
<span class="t" style="top:498px;left:814px;transform:scaleX(0.8990);">0</span>
<div class="rb" style="left:839px;top:494px;width:17px;height:11px;background:#f0f0f0"></div>
<div class="rb" style="left:839px;top:506px;width:17px;height:11px;background:#f0f0f0"></div>
<div class="a" style="left:847px;top:498px;width:1px;height:1px;background:#000"></div>
<div class="a" style="left:846px;top:499px;width:3px;height:1px;background:#000"></div>
<div class="a" style="left:846px;top:510px;width:3px;height:1px;background:#000"></div>
<div class="a" style="left:847px;top:511px;width:1px;height:1px;background:#000"></div>
<span class="t" style="top:521px;left:674.7px;transform:scaleX(0.9104);">Chars</span>
<div class="sk" style="left:713px;top:518px;width:37px;height:23px;background:#fff"></div>
<span class="t" style="top:521px;left:760.2px;transform:scaleX(0.9973);">Words</span>
<div class="sk" style="left:802px;top:518px;width:52px;height:23px;background:#fff"></div>
<span class="t" style="top:549px;left:674.7px;transform:scaleX(0.9711);">Crop</span>
<div class="sk" style="left:713px;top:543px;width:66px;height:23px;background:#fff"></div>
<div class="rb" style="left:760px;top:545px;width:17px;height:19px;background:#f0f0f0"></div>
<div class="a" style="left:765px;top:553px;width:7px;height:1px;background:#000"></div>
<div class="a" style="left:766px;top:554px;width:5px;height:1px;background:#000"></div>
<div class="a" style="left:767px;top:555px;width:3px;height:1px;background:#000"></div>
<div class="a" style="left:768px;top:556px;width:1px;height:1px;background:#000"></div>
<span class="t" style="top:548px;left:717.3px;transform:scaleX(0.9764);">Before</span>
<div class="sk" style="left:802px;top:543px;width:52px;height:23px;background:#fff"></div>
<div class="cb" style="left:674px;top:576px"></div>
<span class="t" style="top:575px;left:691.2px;transform:scaleX(1.0012);">Digits</span>
<div class="cb" style="left:729px;top:576px"></div>
<span class="t" style="top:575px;left:747px;transform:scaleX(1.0432);">High</span>
<div class="cb" style="left:802px;top:570px"></div>
<span class="t" style="top:569px;left:820.5px;transform:scaleX(0.9940);">Trim</span>
<div class="cb" style="left:674px;top:594px"></div>
<span class="t" style="top:593px;left:691.2px;transform:scaleX(0.9339);">D/S</span>
<div class="cb" style="left:729px;top:594px"></div>
<span class="t" style="top:593px;left:747px;transform:scaleX(0.9677);">Accents</span>
<div class="cb" style="left:802px;top:589px"></div>
<span class="t" style="top:588px;left:820.5px;transform:scaleX(0.9104);">Chars</span>
<div class="cb" style="left:674px;top:613px"></div>
<span class="t" style="top:612px;left:691.2px;transform:scaleX(0.9048);">Sym.</span>
<span class="t" style="top:611px;left:743.2px;transform:scaleX(0.9677);">Lead Dots</span>
<div class="sk" style="left:802px;top:606px;width:52px;height:21px;background:#fff"></div>
<div class="rb" style="left:835px;top:608px;width:17px;height:17px;background:#f0f0f0"></div>
<div class="a" style="left:840px;top:615px;width:7px;height:1px;background:#000"></div>
<div class="a" style="left:841px;top:616px;width:5px;height:1px;background:#000"></div>
<div class="a" style="left:842px;top:617px;width:3px;height:1px;background:#000"></div>
<div class="a" style="left:843px;top:618px;width:1px;height:1px;background:#000"></div>
<span class="t" style="top:610px;left:806.3px;transform:scaleX(1.0139);">None</span>
<div class="gb" style="left:867px;top:453px;width:121px;height:178px"></div>
<div class="a" style="left:875px;top:451px;width:45.5px;height:5px;background:#f0f0f0;"></div>
<span class="t" style="top:446px;left:878px;transform:scaleX(0.9558);font-weight:700;">Add (7)</span>
<div class="a" style="left:949px;top:451px;width:37px;height:5px;background:#f0f0f0;"></div>
<div class="cb" style="left:951px;top:448px"><svg width="13" height="13" viewBox="0 0 13 13" style="position:absolute;left:-1px;top:-1px"><path d="M3 6.3 L5.3 8.8 L10 4" fill="none" stroke="#000" stroke-width="2.2"/></svg></div>
<div class="rb" style="left:969px;top:445px;width:16px;height:19px;background:#f0f0f0"></div>
<span class="t" style="top:447px;left:973px;transform:scaleX(0.8078);">R</span>
<span class="t" style="top:472px;left:871.6px;transform:scaleX(0.9657);">Prefix</span>
<div class="sk" style="left:909px;top:468px;width:73px;height:23px;background:#fff"></div>
<span class="t" style="top:497px;left:871.6px;transform:scaleX(0.9793);">Insert</span>
<div class="sk" style="left:909px;top:494px;width:73px;height:23px;background:#fff"></div>
<span class="t" style="top:525.5px;left:878px;transform:scaleX(0.9784);">at pos.</span>
<div class="sk" style="left:923px;top:524px;width:37px;height:23px;background:#fff"></div>
<span class="t" style="top:528px;left:929px;transform:scaleX(0.8990);">0</span>
<div class="rb" style="left:962px;top:526px;width:17px;height:11px;background:#f0f0f0"></div>
<div class="rb" style="left:962px;top:538px;width:17px;height:11px;background:#f0f0f0"></div>
<div class="a" style="left:970px;top:530px;width:1px;height:1px;background:#000"></div>
<div class="a" style="left:969px;top:531px;width:3px;height:1px;background:#000"></div>
<div class="a" style="left:969px;top:542px;width:3px;height:1px;background:#000"></div>
<div class="a" style="left:970px;top:543px;width:1px;height:1px;background:#000"></div>
<span class="t" style="top:559px;left:871.6px;transform:scaleX(0.9632);">Suffix</span>
<div class="sk" style="left:909px;top:556px;width:73px;height:23px;background:#fff"></div>
<div class="cb" style="left:874px;top:585px"></div>
<span class="t" style="top:584px;left:892.3px;transform:scaleX(0.9655);">Word Space</span>
<div class="gb" style="left:993px;top:453px;width:150px;height:178px"></div>
<div class="a" style="left:1001px;top:451px;width:80.7px;height:5px;background:#f0f0f0;"></div>
<span class="t" style="top:446px;left:1004px;transform:scaleX(1.0005);font-weight:700;">Auto Date (8)</span>
<div class="a" style="left:1107px;top:451px;width:36px;height:5px;background:#f0f0f0;"></div>
<div class="cb" style="left:1109px;top:448px"><svg width="13" height="13" viewBox="0 0 13 13" style="position:absolute;left:-1px;top:-1px"><path d="M3 6.3 L5.3 8.8 L10 4" fill="none" stroke="#000" stroke-width="2.2"/></svg></div>
<div class="rb" style="left:1126px;top:445px;width:16px;height:19px;background:#f0f0f0"></div>
<span class="t" style="top:447px;left:1130px;transform:scaleX(0.8078);">R</span>
<span class="t" style="top:472px;left:1000px;transform:scaleX(1.0454);">Mode</span>
<div class="sk" style="left:1040px;top:468px;width:100px;height:23px;background:#fff"></div>
<div class="rb" style="left:1121px;top:470px;width:17px;height:19px;background:#f0f0f0"></div>
<div class="a" style="left:1126px;top:478px;width:7px;height:1px;background:#000"></div>
<div class="a" style="left:1127px;top:479px;width:5px;height:1px;background:#000"></div>
<div class="a" style="left:1128px;top:480px;width:3px;height:1px;background:#000"></div>
<div class="a" style="left:1129px;top:481px;width:1px;height:1px;background:#000"></div>
<span class="t" style="top:473px;left:1044.3px;transform:scaleX(1.0139);">None</span>
<span class="t" style="top:495px;left:1006.5px;transform:scaleX(0.9664);">Type</span>
<div class="sk" style="left:1040px;top:494px;width:100px;height:23px;background:#fff"></div>
<div class="rb" style="left:1121px;top:496px;width:17px;height:19px;background:#f0f0f0"></div>
<div class="a" style="left:1126px;top:504px;width:7px;height:1px;background:#000"></div>
<div class="a" style="left:1127px;top:505px;width:5px;height:1px;background:#000"></div>
<div class="a" style="left:1128px;top:506px;width:3px;height:1px;background:#000"></div>
<div class="a" style="left:1129px;top:507px;width:1px;height:1px;background:#000"></div>
<div class="a" style="left:1042px;top:496px;width:79px;height:19px;overflow:hidden">
<span class="t" style="top:3px;left:3px;transform:scaleX(0.9651);">Creation (Curr</span>
</div>
<span class="t" style="top:525px;left:1006px;transform:scaleX(0.9872);">Fmt</span>
<div class="sk" style="left:1040px;top:520px;width:100px;height:23px;background:#fff"></div>
<div class="rb" style="left:1121px;top:522px;width:17px;height:19px;background:#f0f0f0"></div>
<div class="a" style="left:1126px;top:530px;width:7px;height:1px;background:#000"></div>
<div class="a" style="left:1127px;top:531px;width:5px;height:1px;background:#000"></div>
<div class="a" style="left:1128px;top:532px;width:3px;height:1px;background:#000"></div>
<div class="a" style="left:1129px;top:533px;width:1px;height:1px;background:#000"></div>
<span class="t" style="top:525px;left:1044.3px;transform:scaleX(0.9750);">DMY</span>
<span class="t" style="top:553px;left:1010px;transform:scaleX(0.8887);">Sep.</span>
<div class="sk" style="left:1040px;top:548px;width:28px;height:23px;background:#fff"></div>
<span class="t" style="top:553px;left:1075px;transform:scaleX(0.8892);">Seg.</span>
<div class="sk" style="left:1107px;top:548px;width:31px;height:23px;background:#fff"></div>
<span class="t" style="top:577px;left:1002.5px;transform:scaleX(0.9746);">Custom</span>
<div class="sk" style="left:1054px;top:575px;width:84px;height:23px;background:#fff"></div>
<div class="cb" style="left:1004px;top:608px"></div>
<span class="t" style="top:607px;left:1022.5px;transform:scaleX(0.9319);">Cent.</span>
<span class="t" style="top:607px;left:1065px;transform:scaleX(0.9997);">Off.</span>
<div class="sk" style="left:1089px;top:603px;width:29px;height:23px;background:#fff"></div>
<span class="t" style="top:607px;left:1095px;transform:scaleX(0.8990);">0</span>
<div class="rb" style="left:1123px;top:603px;width:17px;height:11px;background:#f0f0f0"></div>
<div class="rb" style="left:1123px;top:615px;width:17px;height:11px;background:#f0f0f0"></div>
<div class="a" style="left:1131px;top:607px;width:1px;height:1px;background:#000"></div>
<div class="a" style="left:1130px;top:608px;width:3px;height:1px;background:#000"></div>
<div class="a" style="left:1130px;top:619px;width:3px;height:1px;background:#000"></div>
<div class="a" style="left:1131px;top:620px;width:1px;height:1px;background:#000"></div>
<div class="gb" style="left:1151px;top:453px;width:198px;height:178px"></div>
<div class="a" style="left:1159.5px;top:451px;width:93px;height:5px;background:#f0f0f0;"></div>
<span class="t" style="top:446px;left:1162.5px;transform:scaleX(0.9885);font-weight:700;">Numbering (10)</span>
<span class="t" style="top:472px;left:1156.2px;transform:scaleX(1.0454);">Mode</span>
<div class="sk" style="left:1191px;top:468px;width:68px;height:23px;background:#fff"></div>
<div class="rb" style="left:1240px;top:470px;width:17px;height:19px;background:#f0f0f0"></div>
<div class="a" style="left:1245px;top:478px;width:7px;height:1px;background:#000"></div>
<div class="a" style="left:1246px;top:479px;width:5px;height:1px;background:#000"></div>
<div class="a" style="left:1247px;top:480px;width:3px;height:1px;background:#000"></div>
<div class="a" style="left:1248px;top:481px;width:1px;height:1px;background:#000"></div>
<span class="t" style="top:473px;left:1195.3px;transform:scaleX(1.0139);">None</span>
<span class="t" style="top:472px;left:1272.5px;transform:scaleX(1.0170);">at</span>
<div class="sk" style="left:1291px;top:468px;width:40px;height:23px;background:#fff"></div>
<span class="t" style="top:472px;left:1296px;transform:scaleX(0.8990);">0</span>
<span class="t" style="top:498px;left:1158px;transform:scaleX(0.9637);">Start</span>
<div class="sk" style="left:1191px;top:494px;width:42px;height:23px;background:#fff"></div>
<span class="t" style="top:498px;left:1197px;transform:scaleX(0.8990);">1</span>
<div class="rb" style="left:1235px;top:494px;width:17px;height:11px;background:#f0f0f0"></div>
<div class="rb" style="left:1235px;top:506px;width:17px;height:11px;background:#f0f0f0"></div>
<div class="a" style="left:1243px;top:498px;width:1px;height:1px;background:#000"></div>
<div class="a" style="left:1242px;top:499px;width:3px;height:1px;background:#000"></div>
<div class="a" style="left:1242px;top:510px;width:3px;height:1px;background:#000"></div>
<div class="a" style="left:1243px;top:511px;width:1px;height:1px;background:#000"></div>
<span class="t" style="top:496px;left:1264.2px;transform:scaleX(0.9742);">Incr.</span>
<div class="sk" style="left:1291px;top:494px;width:40px;height:23px;background:#fff"></div>
<span class="t" style="top:498px;left:1296px;transform:scaleX(0.8990);">1</span>
<span class="t" style="top:519px;left:1158px;transform:scaleX(0.9447);">Pad</span>
<div class="sk" style="left:1191px;top:516px;width:42px;height:23px;background:#fff"></div>
<span class="t" style="top:520px;left:1197px;transform:scaleX(0.8990);">0</span>
<div class="rb" style="left:1235px;top:517px;width:17px;height:11px;background:#f0f0f0"></div>
<div class="rb" style="left:1235px;top:529px;width:17px;height:11px;background:#f0f0f0"></div>
<div class="a" style="left:1243px;top:521px;width:1px;height:1px;background:#000"></div>
<div class="a" style="left:1242px;top:522px;width:3px;height:1px;background:#000"></div>
<div class="a" style="left:1242px;top:533px;width:3px;height:1px;background:#000"></div>
<div class="a" style="left:1243px;top:534px;width:1px;height:1px;background:#000"></div>
<span class="t" style="top:519px;left:1264.2px;transform:scaleX(0.8887);">Sep.</span>
<div class="sk" style="left:1291px;top:516px;width:40px;height:23px;background:#fff"></div>
<span class="t" style="top:544px;left:1156.2px;transform:scaleX(0.9418);">Break</span>
<div class="sk" style="left:1191px;top:539px;width:42px;height:23px;background:#fff"></div>
<span class="t" style="top:543px;left:1197px;transform:scaleX(0.8990);">0</span>
<div class="rb" style="left:1235px;top:541px;width:17px;height:11px;background:#f0f0f0"></div>
<div class="rb" style="left:1235px;top:553px;width:17px;height:11px;background:#f0f0f0"></div>
<div class="a" style="left:1243px;top:545px;width:1px;height:1px;background:#000"></div>
<div class="a" style="left:1242px;top:546px;width:3px;height:1px;background:#000"></div>
<div class="a" style="left:1242px;top:557px;width:3px;height:1px;background:#000"></div>
<div class="a" style="left:1243px;top:558px;width:1px;height:1px;background:#000"></div>
<div class="cb" style="left:1289px;top:546px"></div>
<span class="t" style="top:574px;left:1158.6px;transform:scaleX(0.9664);">Type</span>
<div class="sk" style="left:1194px;top:569px;width:130px;height:22px;background:#fff"></div>
<span class="t" style="top:574px;left:1198.4px;transform:scaleX(0.9321);">Base 10 (Decimal)</span>
<span class="t" style="top:602px;left:1158.6px;transform:scaleX(0.8738);">Case</span>
<div class="sk" style="left:1194px;top:598px;width:78px;height:21px;background:#fff"></div>
<div class="rb" style="left:1253px;top:600px;width:17px;height:17px;background:#f0f0f0"></div>
<div class="a" style="left:1258px;top:607px;width:7px;height:1px;background:#000"></div>
<div class="a" style="left:1259px;top:608px;width:5px;height:1px;background:#000"></div>
<div class="a" style="left:1260px;top:609px;width:3px;height:1px;background:#000"></div>
<div class="a" style="left:1261px;top:610px;width:1px;height:1px;background:#000"></div>
<span class="t" style="top:603px;left:1198.3px;transform:scaleX(1.0000);"></span>
<div class="gb" style="left:-27px;top:644px;width:869px;height:43px"></div>
<div class="a" style="left:-13.400000000000006px;top:642px;width:113px;height:5px;background:#f0f0f0;"></div>
<span class="t" style="top:637px;right:calc(100% - 96.6px);transform-origin:100% 0;transform:scaleX(0.9275);font-weight:700;">Move/Copy Parts (6)</span>
<div class="a" style="left:806px;top:642px;width:36px;height:5px;background:#f0f0f0;"></div>
<div class="cb" style="left:808px;top:639px"><svg width="13" height="13" viewBox="0 0 13 13" style="position:absolute;left:-1px;top:-1px"><path d="M3 6.3 L5.3 8.8 L10 4" fill="none" stroke="#000" stroke-width="2.2"/></svg></div>
<div class="rb" style="left:825px;top:636px;width:16px;height:19px;background:#f0f0f0"></div>
<span class="t" style="top:638px;left:829px;transform:scaleX(0.8078);">R</span>
<div class="sk" style="left:-13px;top:659px;width:110px;height:23px;background:#fff"></div>
<div class="rb" style="left:78px;top:661px;width:17px;height:19px;background:#f0f0f0"></div>
<div class="a" style="left:83px;top:669px;width:7px;height:1px;background:#000"></div>
<div class="a" style="left:84px;top:670px;width:5px;height:1px;background:#000"></div>
<div class="a" style="left:85px;top:671px;width:3px;height:1px;background:#000"></div>
<div class="a" style="left:86px;top:672px;width:1px;height:1px;background:#000"></div>
<span class="t" style="top:664px;left:-8.7px;transform:scaleX(1.0139);">None</span>
<div class="sk" style="left:104px;top:659px;width:38px;height:23px;background:#fff"></div>
<span class="t" style="top:663px;left:110px;transform:scaleX(0.8990);">1</span>
<div class="rb" style="left:143px;top:659px;width:17px;height:11px;background:#f0f0f0"></div>
<div class="rb" style="left:143px;top:671px;width:17px;height:11px;background:#f0f0f0"></div>
<div class="a" style="left:151px;top:663px;width:1px;height:1px;background:#000"></div>
<div class="a" style="left:150px;top:664px;width:3px;height:1px;background:#000"></div>
<div class="a" style="left:150px;top:675px;width:3px;height:1px;background:#000"></div>
<div class="a" style="left:151px;top:676px;width:1px;height:1px;background:#000"></div>
<div class="sk" style="left:174px;top:659px;width:113px;height:23px;background:#fff"></div>
<div class="rb" style="left:268px;top:661px;width:17px;height:19px;background:#f0f0f0"></div>
<div class="a" style="left:273px;top:669px;width:7px;height:1px;background:#000"></div>
<div class="a" style="left:274px;top:670px;width:5px;height:1px;background:#000"></div>
<div class="a" style="left:275px;top:671px;width:3px;height:1px;background:#000"></div>
<div class="a" style="left:276px;top:672px;width:1px;height:1px;background:#000"></div>
<span class="t" style="top:664px;left:178.3px;transform:scaleX(1.0139);">None</span>
<div class="sk" style="left:295px;top:659px;width:38px;height:23px;background:#fff"></div>
<span class="t" style="top:663px;left:301px;transform:scaleX(0.8990);">1</span>
<div class="rb" style="left:334px;top:659px;width:17px;height:11px;background:#f0f0f0"></div>
<div class="rb" style="left:334px;top:671px;width:17px;height:11px;background:#f0f0f0"></div>
<div class="a" style="left:342px;top:663px;width:1px;height:1px;background:#000"></div>
<div class="a" style="left:341px;top:664px;width:3px;height:1px;background:#000"></div>
<div class="a" style="left:341px;top:675px;width:3px;height:1px;background:#000"></div>
<div class="a" style="left:342px;top:676px;width:1px;height:1px;background:#000"></div>
<span class="t" style="top:663px;left:365.3px;transform:scaleX(0.8887);">Sep.</span>
<div class="sk" style="left:400px;top:659px;width:422px;height:23px;background:#fff"></div>
<div class="gb" style="left:853px;top:644px;width:290px;height:43px"></div>
<div class="a" style="left:861.4px;top:642px;width:140.1px;height:5px;background:#f0f0f0;"></div>
<span class="t" style="top:637px;left:864.4px;transform:scaleX(0.9670);font-weight:700;">Append Folder Name (9)</span>
<div class="a" style="left:1108px;top:642px;width:35px;height:5px;background:#f0f0f0;"></div>
<div class="cb" style="left:1110px;top:639px"><svg width="13" height="13" viewBox="0 0 13 13" style="position:absolute;left:-1px;top:-1px"><path d="M3 6.3 L5.3 8.8 L10 4" fill="none" stroke="#000" stroke-width="2.2"/></svg></div>
<div class="rb" style="left:1126px;top:636px;width:16px;height:19px;background:#f0f0f0"></div>
<span class="t" style="top:638px;left:1130px;transform:scaleX(0.8078);">R</span>
<span class="t" style="top:664px;left:864.4px;transform:scaleX(0.9907);">Name</span>
<div class="sk" style="left:904px;top:659px;width:62px;height:23px;background:#fff"></div>
<div class="rb" style="left:947px;top:661px;width:17px;height:19px;background:#f0f0f0"></div>
<div class="a" style="left:952px;top:669px;width:7px;height:1px;background:#000"></div>
<div class="a" style="left:953px;top:670px;width:5px;height:1px;background:#000"></div>
<div class="a" style="left:954px;top:671px;width:3px;height:1px;background:#000"></div>
<div class="a" style="left:955px;top:672px;width:1px;height:1px;background:#000"></div>
<span class="t" style="top:664px;left:908.3px;transform:scaleX(1.0139);">None</span>
<span class="t" style="top:664px;left:976.4px;transform:scaleX(0.8887);">Sep.</span>
<div class="sk" style="left:1005px;top:659px;width:34px;height:23px;background:#fff"></div>
<span class="t" style="top:664px;left:1049.6px;transform:scaleX(0.9314);">Levels</span>
<div class="sk" style="left:1091px;top:659px;width:28px;height:23px;background:#fff"></div>
<span class="t" style="top:663px;left:1097px;transform:scaleX(0.8990);">1</span>
<div class="rb" style="left:1119px;top:659px;width:17px;height:11px;background:#f0f0f0"></div>
<div class="rb" style="left:1119px;top:671px;width:17px;height:11px;background:#f0f0f0"></div>
<div class="a" style="left:1127px;top:663px;width:1px;height:1px;background:#000"></div>
<div class="a" style="left:1126px;top:664px;width:3px;height:1px;background:#000"></div>
<div class="a" style="left:1126px;top:675px;width:3px;height:1px;background:#000"></div>
<div class="a" style="left:1127px;top:676px;width:1px;height:1px;background:#000"></div>
<div class="gb" style="left:1151px;top:644px;width:198px;height:43px"></div>
<div class="a" style="left:1159.5px;top:642px;width:83.5px;height:5px;background:#f0f0f0;"></div>
<span class="t" style="top:637px;left:1162.5px;transform:scaleX(0.9526);font-weight:700;">Extension (11)</span>
<div class="sk" style="left:1165px;top:659px;width:74px;height:23px;background:#fff"></div>
<div class="rb" style="left:1220px;top:661px;width:17px;height:19px;background:#f0f0f0"></div>
<div class="a" style="left:1225px;top:669px;width:7px;height:1px;background:#000"></div>
<div class="a" style="left:1226px;top:670px;width:5px;height:1px;background:#000"></div>
<div class="a" style="left:1227px;top:671px;width:3px;height:1px;background:#000"></div>
<div class="a" style="left:1228px;top:672px;width:1px;height:1px;background:#000"></div>
<span class="t" style="top:664px;left:1169.3px;transform:scaleX(0.9159);">Same</span>
<div class="sk" style="left:1245px;top:659px;width:80px;height:23px;background:#fff"></div>
<div class="a" style="left:0px;top:700px;width:1307px;height:4px;background:#dcdcdc;"></div>
<div class="gb" style="left:-27px;top:719px;width:668px;height:99px"></div>
<div class="a" style="left:-18.482861328124997px;top:717px;width:64.482861328125px;height:5px;background:#f0f0f0;"></div>
<span class="t" style="top:712px;right:calc(100% - 43px);transform-origin:100% 0;transform:scaleX(0.9637);font-weight:700;">Filters (12)</span>
<div class="a" style="left:622px;top:716px;width:20px;height:6px;background:#f0f0f0;"></div>
<div class="rb" style="left:624px;top:711px;width:16px;height:19px;background:#f0f0f0"></div>
<span class="t" style="top:713px;left:628px;transform:scaleX(0.8078);">R</span>
<span class="t" style="top:738px;right:calc(100% - 5.5px);transform-origin:100% 0;transform:scaleX(0.9823);">Mask</span>
<div class="sk" style="left:17px;top:734px;width:177px;height:23px;background:#fff"></div>
<span class="t" style="top:738px;left:22px;transform:scaleX(1.0715);">*</span>
<div class="cb" style="left:236px;top:737px"><svg width="13" height="13" viewBox="0 0 13 13" style="position:absolute;left:-1px;top:-1px"><path d="M3 6.3 L5.3 8.8 L10 4" fill="none" stroke="#000" stroke-width="2.2"/></svg></div>
<span class="t" style="top:736px;left:254.3px;transform:scaleX(0.9634);">Folders</span>
<div class="cb" style="left:304px;top:737px"></div>
<span class="t" style="top:736px;left:322px;transform:scaleX(1.0280);">Hidden</span>
<div class="cb" style="left:236px;top:761px"><svg width="13" height="13" viewBox="0 0 13 13" style="position:absolute;left:-1px;top:-1px"><path d="M3 6.3 L5.3 8.8 L10 4" fill="none" stroke="#000" stroke-width="2.2"/></svg></div>
<span class="t" style="top:760px;left:254.3px;transform:scaleX(0.9151);">Files</span>
<div class="cb" style="left:304px;top:761px"></div>
<span class="t" style="top:760px;left:322px;transform:scaleX(0.9784);">Subfolders</span>
<div class="cb" style="left:20px;top:765px"></div>
<span class="t" style="top:764px;left:37.9px;transform:scaleX(0.9568);">Match Case</span>
<div class="cb" style="left:125px;top:765px"></div>
<span class="t" style="top:764px;left:143.2px;transform:scaleX(0.8844);">RegEx</span>
<span class="t" style="top:735px;left:431.3px;transform:scaleX(1.0183);">Name Min</span>
<div class="sk" style="left:495px;top:730px;width:22px;height:23px;background:#fff"></div>
<span class="t" style="top:734px;left:498px;transform:scaleX(0.8990);">0</span>
<div class="rb" style="left:521px;top:730px;width:17px;height:11px;background:#f0f0f0"></div>
<div class="rb" style="left:521px;top:742px;width:17px;height:11px;background:#f0f0f0"></div>
<div class="a" style="left:529px;top:734px;width:1px;height:1px;background:#000"></div>
<div class="a" style="left:528px;top:735px;width:3px;height:1px;background:#000"></div>
<div class="a" style="left:528px;top:746px;width:3px;height:1px;background:#000"></div>
<div class="a" style="left:529px;top:747px;width:1px;height:1px;background:#000"></div>
<span class="t" style="top:735px;left:545.7px;transform:scaleX(0.9975);">Max</span>
<div class="sk" style="left:573px;top:730px;width:23px;height:22px;background:#fff"></div>
<span class="t" style="top:734px;left:576px;transform:scaleX(0.8990);">0</span>
<div class="rb" style="left:601px;top:730px;width:17px;height:11px;background:#f0f0f0"></div>
<div class="rb" style="left:601px;top:742px;width:17px;height:11px;background:#f0f0f0"></div>
<div class="a" style="left:609px;top:734px;width:1px;height:1px;background:#000"></div>
<div class="a" style="left:608px;top:735px;width:3px;height:1px;background:#000"></div>
<div class="a" style="left:608px;top:746px;width:3px;height:1px;background:#000"></div>
<div class="a" style="left:609px;top:747px;width:1px;height:1px;background:#000"></div>
<span class="t" style="top:759px;left:393.6px;transform:scaleX(0.9553);">Lvl</span>
<div class="sk" style="left:414px;top:756px;width:19px;height:23px;background:#fff"></div>
<span class="t" style="top:760px;left:419px;transform:scaleX(0.8990);">0</span>
<span class="t" style="top:759px;left:440.4px;transform:scaleX(1.0119);">Path Min</span>
<div class="sk" style="left:495px;top:756px;width:22px;height:23px;background:#fff"></div>
<span class="t" style="top:760px;left:498px;transform:scaleX(0.8990);">0</span>
<div class="rb" style="left:521px;top:756px;width:17px;height:11px;background:#f0f0f0"></div>
<div class="rb" style="left:521px;top:768px;width:17px;height:11px;background:#f0f0f0"></div>
<div class="a" style="left:529px;top:760px;width:1px;height:1px;background:#000"></div>
<div class="a" style="left:528px;top:761px;width:3px;height:1px;background:#000"></div>
<div class="a" style="left:528px;top:772px;width:3px;height:1px;background:#000"></div>
<div class="a" style="left:529px;top:773px;width:1px;height:1px;background:#000"></div>
<span class="t" style="top:759px;left:545.7px;transform:scaleX(0.9975);">Max</span>
<div class="sk" style="left:573px;top:756px;width:23px;height:22px;background:#fff"></div>
<span class="t" style="top:760px;left:576px;transform:scaleX(0.8990);">0</span>
<div class="rb" style="left:601px;top:756px;width:17px;height:11px;background:#f0f0f0"></div>
<div class="rb" style="left:601px;top:768px;width:17px;height:11px;background:#f0f0f0"></div>
<div class="a" style="left:609px;top:760px;width:1px;height:1px;background:#000"></div>
<div class="a" style="left:608px;top:761px;width:3px;height:1px;background:#000"></div>
<div class="a" style="left:608px;top:772px;width:3px;height:1px;background:#000"></div>
<div class="a" style="left:609px;top:773px;width:1px;height:1px;background:#000"></div>
<span class="t" style="top:789px;left:174.2px;transform:scaleX(1.0169);">Condition</span>
<div class="sk" style="left:234px;top:786px;width:361px;height:23px;background:#fff"></div>
<svg class="a" style="left:203.5px;top:736px" width="13" height="16" viewBox="0 0 13 16"><path d="M0.4 6.7 Q2.5 2 8 2.2 L8.6 0 L12.2 4.3 L6.4 7.3 L7 5 Q3.5 4.4 0.4 6.7 Z" fill="#1f9df2"/><path d="M12.2 9.3 Q10.1 14 4.6 13.8 L4 16 L0.4 11.7 L6.2 8.7 L5.6 11 Q9.1 11.6 12.2 9.3 Z" fill="#25a8f8"/></svg>
<svg class="a" style="left:602.5px;top:787.5px" width="13" height="16" viewBox="0 0 13 16"><path d="M0.4 6.7 Q2.5 2 8 2.2 L8.6 0 L12.2 4.3 L6.4 7.3 L7 5 Q3.5 4.4 0.4 6.7 Z" fill="#1f9df2"/><path d="M12.2 9.3 Q10.1 14 4.6 13.8 L4 16 L0.4 11.7 L6.2 8.7 L5.6 11 Q9.1 11.6 12.2 9.3 Z" fill="#25a8f8"/></svg>
<div class="gb" style="left:650px;top:719px;width:603px;height:69px"></div>
<div class="a" style="left:657.7px;top:717px;width:160.3px;height:5px;background:#f0f0f0;"></div>
<span class="t" style="top:712px;left:660.7px;transform:scaleX(0.9848);font-weight:700;">Copy/Move to Location (13)</span>
<div class="a" style="left:1232px;top:716px;width:20px;height:6px;background:#f0f0f0;"></div>
<div class="rb" style="left:1234px;top:711px;width:16px;height:19px;background:#f0f0f0"></div>
<span class="t" style="top:713px;left:1238px;transform:scaleX(0.8078);">R</span>
<span class="t" style="top:735px;left:659.3px;transform:scaleX(0.9703);">Path</span>
<div class="sk" style="left:698px;top:734px;width:517px;height:23px;background:#fff"></div>
<div class="cb" style="left:698px;top:765px"><svg width="13" height="13" viewBox="0 0 13 13" style="position:absolute;left:-1px;top:-1px"><path d="M3 6.3 L5.3 8.8 L10 4" fill="none" stroke="#000" stroke-width="2.2"/></svg></div>
<span class="t" style="top:764px;left:716.3px;transform:scaleX(1.0086);">Copy not Move</span>
<svg class="a" style="left:1222px;top:737px" width="14" height="12" viewBox="0 0 14 12"><path d="M0 1 H5 L6.5 2.5 H14 V12 H0 Z" fill="#d9b46c"/><rect x="7" y="0" width="6" height="2" fill="#e6cf9d"/></svg>
<svg class="a" style="left:661px;top:754px" width="16" height="15" viewBox="0 0 16 15"><path d="M1.5 0.5 H6.5 L8.5 2.5 V8.5 H1.5 Z" fill="#fff" stroke="#777" stroke-width="1"/><path d="M5 7.5 V6.3 H9 L10 7.5 H14.5 V14 H5 Z" fill="#ecc655" stroke="#b8943a" stroke-width="0.8"/><path d="M10 2 q3 0 3 3" fill="none" stroke="#555" stroke-width="1"/><path d="M11.5 4 L13 6 L14.5 4 Z" fill="#555"/></svg>
<div class="gb" style="left:-27px;top:832px;width:735px;height:59px"></div>
<div class="a" style="left:-19.307275390625px;top:830px;width:69.807275390625px;height:5px;background:#f0f0f0;"></div>
<span class="t" style="top:825px;right:calc(100% - 47.5px);transform-origin:100% 0;transform:scaleX(0.9567);font-weight:700;">Special (14)</span>
<div class="cb" style="left:-10px;top:855px"></div>
<span class="t" style="top:847px;left:12.1px;transform:scaleX(0.9868);">Change File Attributes</span>
<span class="t" style="top:866px;left:36.1px;transform:scaleX(0.9642);">Status:  Not Set</span>
<div class="cb" style="left:171px;top:855px"></div>
<span class="t" style="top:847px;left:194.4px;transform:scaleX(0.9623);">Change File Timestamps</span>
<span class="t" style="top:866px;left:218px;transform:scaleX(0.9642);">Status:  Not Set</span>
<div class="cb" style="left:365px;top:855px"></div>
<span class="t" style="top:847px;left:386.6px;transform:scaleX(0.9636);">Character Translations</span>
<span class="t" style="top:866px;left:411.2px;transform:scaleX(0.9642);">Status:  Not Set</span>
<div class="cb" style="left:547px;top:855px"></div>
<span class="t" style="top:847px;left:567.8px;transform:scaleX(0.9578);">Javascript Renaming</span>
<span class="t" style="top:866px;left:593.2px;transform:scaleX(0.9642);">Status:  Not Set</span>
<svg class="a" style="left:14px;top:865px" width="15" height="15" viewBox="0 0 15 15"><rect x="0.5" y="3.5" width="11" height="11" fill="#e8eefc" stroke="#4a6fc0"/><rect x="2.5" y="6" width="7" height="6" fill="#c8d6f4" stroke="#7f9ad8" stroke-width="0.8"/><path d="M5 10 L12 2.5 L14 4.5 L7 11.5 Z" fill="#e03a2a"/><path d="M12 2.5 L13.2 1.2 L15 3 L14 4.5 Z" fill="#f4a09a"/></svg>
<svg class="a" style="left:195px;top:865px" width="16" height="15" viewBox="0 0 16 15"><rect x="0.5" y="0.5" width="15" height="14" fill="#fff" stroke="#3a62b8"/><rect x="1" y="1" width="14" height="3.5" fill="#4a78d0"/><g fill="#3a62b8"><rect x="2.5" y="6" width="2" height="2"/><rect x="5.5" y="6" width="2" height="2"/><rect x="8.5" y="6" width="2" height="2"/><rect x="11.5" y="6" width="2" height="2"/><rect x="2.5" y="9" width="2" height="2"/><rect x="5.5" y="9" width="2" height="2"/><rect x="2.5" y="12" width="2" height="2"/><rect x="5.5" y="12" width="2" height="2"/><rect x="8.5" y="12" width="2" height="2"/></g><rect x="9" y="9" width="4" height="4" fill="#fff" stroke="#e03a2a"/></svg>
<svg class="a" style="left:389px;top:866px" width="15" height="14" viewBox="0 0 15 14"><rect x="0.5" y="0.5" width="13" height="13" fill="#eef3fc" stroke="#6a86c8"/><rect x="2.5" y="2.5" width="2.5" height="2.5" fill="#e07a2a"/><rect x="2.5" y="6" width="2.5" height="2.5" fill="#3a62b8"/><rect x="2.5" y="9.5" width="2.5" height="2.5" fill="#3a62b8"/><rect x="6.5" y="3" width="5" height="1.2" fill="#6a86c8"/><rect x="6.5" y="6.6" width="5" height="1.2" fill="#6a86c8"/><rect x="6.5" y="10" width="5" height="1.2" fill="#6a86c8"/></svg>
<svg class="a" style="left:569px;top:866px" width="17" height="14" viewBox="0 0 17 14"><path d="M2.5 0.5 H15.5 V10.5 H2.5 Z" fill="#eef3fc" stroke="#6a86c8"/><path d="M0.5 10.5 H13.5 Q13.5 13.5 11 13.5 H3 Q0.5 13.5 0.5 10.5 Z" fill="#dfe8fa" stroke="#6a86c8"/><rect x="4.5" y="3" width="6" height="1" fill="#3a8a4a"/><rect x="4.5" y="5" width="8" height="1" fill="#6a86c8"/><rect x="4.5" y="7" width="5" height="1" fill="#6a86c8"/></svg>
<div class="a" style="left:722px;top:831px;width:74px;height:64px;background:#ff4500;"></div>
<span class="t" style="top:836px;left:726.2px;transform:scaleX(0.9703);font-weight:700;color:#fff;">Rename</span>
<span class="t" style="top:851px;left:726.2px;transform:scaleX(0.9114);font-weight:700;color:#fff;">Pairs</span>
<span class="t" style="top:866px;left:726.2px;transform:scaleX(1.0110);font-weight:700;color:#fff;">Imported</span>
<span class="t" style="top:836px;left:806px;transform:scaleX(0.9998);font-weight:700;">Bulk Rename Utility 64-bit</span>
<span class="t" style="top:854px;left:806px;transform:scaleX(0.9723);font-weight:700;">(Unicode)</span>
<span class="t" style="top:872px;left:806px;transform:scaleX(0.9424);">TGRMN Software 2001-2022</span>
<div class="a" style="left:1038px;top:831px;width:23px;height:24px;box-sizing:border-box;border:1px solid;border-color:#fff #5a5a5a #5a5a5a #fff"></div>
<svg class="a" style="left:1044px;top:837.5px" width="11" height="11" viewBox="0 0 11 11"><rect x="0.7" y="0.7" width="9.6" height="9.6" fill="#f4f4f4" stroke="#333" stroke-width="1.4"/><path d="M2 2 L4.3 4.3 M9 2 L6.7 4.3 M2 9 L4.3 6.7 M9 9 L6.7 6.7" stroke="#444" stroke-width="1.1"/></svg>
<div class="a" style="left:1041.8px;top:871.6px;width:14.4px;height:14.4px;border-radius:50%;background:#3a3a3a;box-shadow:0 0 0 1px #fafafa"></div>
<span class="t" style="top:872.5px;left:1045.6px;transform:scaleX(0.9550);font-weight:700;color:#fff;">?</span>
<div class="a" style="left:1082px;top:813px;width:168px;height:4px;background:#ffd400;"></div>
<div class="rb" style="left:1077px;top:827px;width:68px;height:20px;background:#eaf1fb"></div>
<span class="t" style="top:830px;left:1090.47px;transform:scaleX(0.9619);">Preview</span>
<div class="rb" style="left:1077px;top:851px;width:68px;height:20px;background:#eaf1fb"></div>
<span class="t" style="top:854px;left:1096.64px;transform:scaleX(0.9164);">Reset</span>
<div class="rb" style="left:1077px;top:875px;width:68px;height:21px;background:#eaf1fb"></div>
<span class="t" style="top:879px;left:1094.22px;transform:scaleX(0.9494);">Revert</span>
<div class="rb" style="left:1159px;top:831px;width:93px;height:60px;background:#d0d6e8"></div>
<span class="t" style="top:854px;left:1184.12px;transform:scaleX(0.9429);">Rename</span>
<div class="a" style="left:1303px;top:801px;width:4px;height:98px;background:#44567a;"></div>
<div class="a" style="left:1303px;top:899px;width:4px;height:1px;background:#3cc43c;"></div>
<svg class="a" style="left:1070px;top:720px" width="120" height="130" viewBox="1070 720 120 130"><path d="M1088.5 735 C1097 741 1104 750 1112 762 L1153 814" fill="none" stroke="#e31a1c" stroke-width="13.5" stroke-linecap="round"/><path d="M1090 836.5 C1110 827 1135 822 1152 818 Q1163 816 1165 806 C1167 797 1168 788 1168.5 778" fill="none" stroke="#e31a1c" stroke-width="13.5" stroke-linecap="round" stroke-linejoin="round"/></svg>
<div class="a" style="left:0px;top:903px;width:1307px;height:14px;background:#d0d6e8;"></div>
<span class="t" style="top:908px;left:2px;transform:scaleX(0.9726);">Rename Utility is </span>
<span class="t" style="top:908px;left:92.8px;transform:scaleX(0.9777);font-weight:700;">free for personal, non-commercial, home use</span>
<span class="t" style="top:908px;left:343.8px;transform:scaleX(0.9881);">. For use in a commercial environment, a commercial license is required. </span>
<span class="t" style="top:908px;left:728px;transform:scaleX(1.0371);font-weight:700;color:#0a1a8a;">More Info</span>
</div>
</body></html>
